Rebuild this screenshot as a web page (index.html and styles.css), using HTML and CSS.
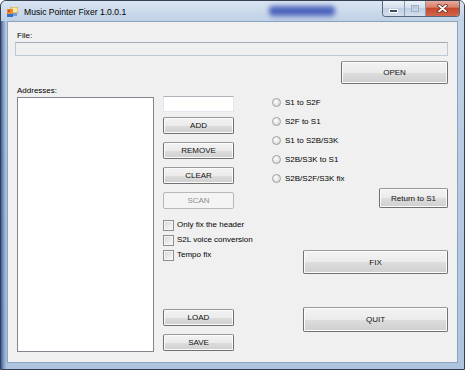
FILE: index.html
```html
<!DOCTYPE html>
<html lang="en">

<head>
    <meta charset="UTF-8">
    <meta name="viewport" content="width=device-width, initial-scale=1.0">
    <title>Music Pointer Fixer 1.0.0.1</title>
    <link rel="stylesheet" href="styles.css">
</head>

<body>

    <div class="window">
        <div class="titlebar">
            <svg class="app-icon" width="11" height="10" viewBox="0 0 11 10">
                <rect x="4" y="0" width="7" height="6" fill="#f6e7a8" stroke="#c8a23c" stroke-width="1"/>
                <rect x="0" y="2" width="6" height="6" fill="#e88b2e"/>
                <rect x="1" y="3" width="2" height="2" fill="#d7412a"/>
                <rect x="0" y="7" width="6" height="3" fill="#3b6fc4"/>
                <rect x="6" y="6" width="4" height="3" fill="#6fa0de"/>
            </svg>
            <span class="title">Music Pointer Fixer 1.0.0.1</span>
            <span class="glass-blur"></span>
            <div class="caption-buttons">
                <span class="cap-btn cap-min">
                    <svg width="9" height="4" viewBox="0 0 9 4">
                        <rect x="0.5" y="0.5" width="8" height="3" fill="#3a4a5c" stroke="#fff" stroke-width="1"/>
                    </svg>
                </span>
                <span class="cap-btn cap-max">
                    <svg width="8" height="7" viewBox="0 0 8 7">
                        <rect x="0.5" y="0.5" width="7" height="6" fill="none" stroke="#9fb0c4" stroke-width="1"/>
                        <rect x="1.5" y="1.5" width="5" height="1" fill="#9fb0c4"/>
                    </svg>
                </span>
                <span class="cap-btn cap-close">
                    <svg width="11" height="9" viewBox="0 0 11 9">
                        <path d="M2 1.5 L9 7.5 M9 1.5 L2 7.5" stroke="#6b2418" stroke-width="3.4" stroke-linecap="round"/>
                        <path d="M2 1.5 L9 7.5 M9 1.5 L2 7.5" stroke="#fff" stroke-width="1.8" stroke-linecap="round"/>
                    </svg>
                </span>
            </div>
        </div>

        <div class="client">
            <div class="lbl file-lbl">File:</div>
            <div class="textbox file-box"></div>
            <button class="btn open-btn">OPEN</button>

            <div class="main">
                <div class="col-list">
                    <div class="lbl">Addresses:</div>
                    <div class="listbox"></div>
                </div>

                <div class="col-mid">
                    <div class="textbox addr-box"></div>
                    <button class="btn small-btn add-btn">ADD</button>
                    <button class="btn small-btn">REMOVE</button>
                    <button class="btn small-btn">CLEAR</button>
                    <button class="btn small-btn" disabled>SCAN</button>

                    <div class="checks">
                        <div class="check-row"><span class="check-box"></span>Only fix the header</div>
                        <div class="check-row"><span class="check-box"></span>S2L voice conversion</div>
                        <div class="check-row"><span class="check-box"></span>Tempo fix</div>
                    </div>

                    <button class="btn small-btn load-btn">LOAD</button>
                    <button class="btn small-btn">SAVE</button>
                </div>

                <div class="col-right">
                    <div class="radios">
                        <div class="radio-row"><span class="radio-dot"></span>S1 to S2F</div>
                        <div class="radio-row"><span class="radio-dot"></span>S2F to S1</div>
                        <div class="radio-row"><span class="radio-dot"></span>S1 to S2B/S3K</div>
                        <div class="radio-row"><span class="radio-dot"></span>S2B/S3K to S1</div>
                        <div class="radio-row"><span class="radio-dot"></span>S2B/S2F/S3K fix</div>
                    </div>
                    <button class="btn return-btn">Return to S1</button>
                    <button class="btn wide-btn fix-btn">FIX</button>
                    <button class="btn wide-btn quit-btn">QUIT</button>
                </div>
            </div>
        </div>
    </div>

</body>

</html>
```

FILE: styles.css
```css
body {
    margin: 0;
    font-family: 'Liberation Sans', Arial, sans-serif;
    background-color: #fff;
}

.window {
    width: 465px;
    height: 370px;
    box-sizing: border-box;
    display: flex;
    flex-direction: column;
    border: 1px solid #34404f;
    border-radius: 6px 6px 0 0;
    background:
        linear-gradient(to right, rgba(30, 60, 130, 0.75) 0, rgba(60, 95, 160, 0.35) 3px, rgba(0, 0, 0, 0) 6px),
        linear-gradient(to bottom, #c6d6e8 0, #b7cbe2 40%, #aec4de 100%);
    overflow: hidden;
}

.titlebar {
    height: 20px;
    display: flex;
    align-items: center;
    padding-left: 6px;
    position: relative;
    background: linear-gradient(to bottom, #d9e4f1 0, #c9d8ea 60%, #c0d1e6 100%);
}

.app-icon {
    margin-right: 6px;
    margin-top: 1px;
}

.title {
    font-size: 8.6px;
    color: #000;
    margin-top: 1px;
}

.glass-blur {
    position: absolute;
    left: 268px;
    top: 5px;
    width: 66px;
    height: 10px;
    border-radius: 4px;
    background-color: #2d47b0;
    filter: blur(2.5px);
    opacity: 0.8;
}

.caption-buttons {
    margin-left: auto;
    margin-right: 4px;
    align-self: flex-start;
    display: flex;
    height: 16px;
    margin-top: -1px;
    border: 1px solid #56667c;
    border-top: none;
    border-radius: 0 0 4px 4px;
    overflow: hidden;
}

.cap-btn {
    display: flex;
    align-items: center;
    justify-content: center;
}

.cap-min,
.cap-max {
    width: 21px;
    background: linear-gradient(to bottom, #eef3f9 0, #d3deeb 50%, #bfcfe2 51%, #d4e0ee 100%);
    border-right: 1px solid #8a9ab0;
}

.cap-min svg {
    margin-top: 5px;
}

.cap-max {
    width: 20px;
}

.cap-close {
    width: 33px;
    background: linear-gradient(to bottom, #eab3a6 0, #d8806a 45%, #c6482e 52%, #d2664c 100%);
}

.client {
    flex: 1;
    margin: 0 6px 6px 6px;
    border: 1px solid #8aa3bf;
    background-color: #f0f0f0;
    display: flex;
    flex-direction: column;
    padding: 7px 9px 10px 7px;
}

.lbl {
    font-size: 8px;
    line-height: 13px;
    color: #000;
}

.file-lbl {
    margin-left: 2px;
}

.textbox {
    box-sizing: border-box;
    border: 1px solid #e2e7ed;
    border-top-color: #adb2b8;
}

.file-box {
    height: 14px;
    background-color: #f0f0f0;
    border-color: #bcc8d6;
    border-top-color: #a3acb6;
}

.btn {
    box-sizing: border-box;
    padding: 0;
    font-family: 'Liberation Sans', Arial, sans-serif;
    font-size: 8px;
    font-weight: normal;
    color: #111;
    border: 1px solid #707070;
    border-top-color: #9a9a9a;
    border-radius: 2px;
    box-shadow: inset 0 0 0 1px #fbfbfb;
    background: linear-gradient(to bottom, #f3f3f3 0, #ebebeb 50%, #dddddd 51%, #cfcfcf 100%);
}

.btn:disabled {
    color: #8d8d8d;
    border-color: #b5b9bc;
    background: #f4f4f4;
    box-shadow: none;
}

.open-btn {
    align-self: flex-end;
    width: 107px;
    height: 23px;
    margin-top: 5px;
}

.main {
    flex: 1;
    margin-left: 2px;
    display: grid;
    grid-template-columns: 137px 9px 71px 1fr;
}

.col-list {
    display: flex;
    flex-direction: column;
}

.listbox {
    flex: 1;
    background-color: #fff;
    border: 1px solid #828790;
}

.col-mid {
    grid-column: 3;
    display: flex;
    flex-direction: column;
    padding-top: 12px;
    padding-bottom: 1px;
}

.addr-box {
    height: 16px;
    background-color: #fff;
}

.small-btn {
    height: 17px;
    margin-top: 8px;
}

.add-btn {
    margin-top: 5px;
}

.checks {
    margin-top: 8px;
}

.check-row {
    height: 15px;
    display: flex;
    align-items: center;
    white-space: nowrap;
    font-size: 8px;
    color: #000;
}

.check-box {
    flex-shrink: 0;
    width: 11px;
    height: 11px;
    box-sizing: border-box;
    margin-top: 2px;
    margin-right: 3px;
    border: 1px solid #8e8f8f;
    background: linear-gradient(135deg, #d6d6d6 0, #ececec 60%, #f7f7f7 100%);
    box-shadow: inset 0 0 0 1px #f4f4f4;
}

.load-btn {
    margin-top: auto;
}

.col-right {
    display: flex;
    flex-direction: column;
    padding-top: 9px;
}

.radio-row {
    height: 19px;
    display: flex;
    align-items: center;
    padding-left: 38px;
    font-size: 8px;
    color: #000;
}

.radio-dot {
    flex-shrink: 0;
    width: 9px;
    height: 9px;
    box-sizing: border-box;
    margin-right: 4px;
    border-radius: 50%;
    border: 1px solid #a0a0a0;
    background: radial-gradient(circle at 40% 35%, #ffffff 0, #e4e4e4 55%, #cfcfcf 100%);
}

.return-btn {
    align-self: flex-end;
    width: 69px;
    height: 20px;
}

.wide-btn {
    align-self: flex-end;
    width: 145px;
}

.fix-btn {
    height: 24px;
    margin-top: 42px;
}

.quit-btn {
    height: 25px;
    margin-top: 33px;
}
```
